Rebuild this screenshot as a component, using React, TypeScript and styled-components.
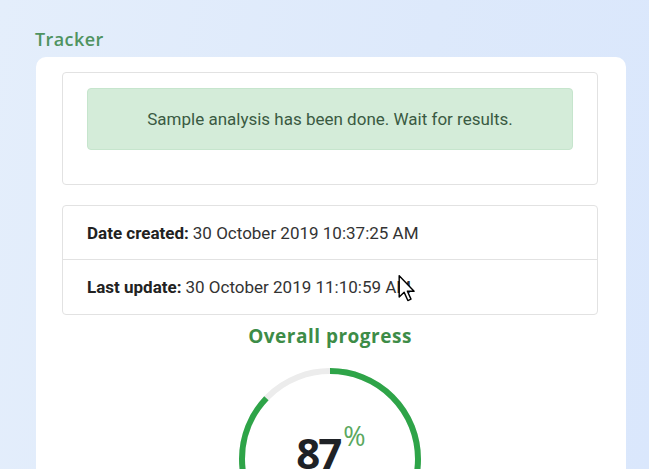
import React from "react";
import styled, { createGlobalStyle } from "styled-components";

const GlobalStyle = createGlobalStyle`
  html, body {
    margin: 0;
    padding: 0;
    height: 100%;
    overflow: hidden;
  }
  body {
    background: linear-gradient(100deg, #e4eefb 0%, #dde9fb 60%, #dae7fc 100%);
    font-family: Roboto, "Liberation Sans", Arial, sans-serif;
  }
`;

const Page = styled.div`
  padding: 28px 23px 0 36px;
`;

const Title = styled.h2`
  margin: 0 0 7px -1px;
  font-family: "Open Sans", "Noto Sans", sans-serif;
  font-size: 18px;
  font-weight: 600;
  line-height: 22px;
  letter-spacing: 0.4px;
  color: #4f9360;
`;

const Card = styled.div`
  position: relative;
  background: #ffffff;
  border-radius: 10px 10px 0 0;
  padding: 15px 28px 0 26px;
  height: 420px;
  display: flex;
  flex-direction: column;
`;

const Panel = styled.div`
  border: 1px solid #e2e2e2;
  border-radius: 4px;
  background: #fff;
`;

const AlertPanel = styled(Panel)`
  padding: 15px 24px 34px 24px;
  margin-bottom: 20px;
`;

const Alert = styled.div`
  height: 60px;
  display: flex;
  align-items: center;
  justify-content: center;
  background: #d4ecd9;
  border: 1px solid #c6e5cd;
  border-radius: 4px;
  color: #3a5a42;
  font-size: 17px;
`;

const InfoRow = styled.div<{ $last?: boolean }>`
  height: ${(p) => (p.$last ? 54 : 53)}px;
  display: flex;
  align-items: center;
  padding: 0 24px;
  font-size: 17px;
  color: #333;
  border-bottom: ${(p) => (p.$last ? "none" : "1px solid #e2e2e2")};
`;

const Label = styled.strong`
  font-weight: 700;
  color: #222;
  margin-right: 4px;
`;

const Progress = styled.div`
  display: flex;
  flex-direction: column;
  align-items: center;
  margin-top: 10px;
`;

const ProgressTitle = styled.h3`
  margin: 0 0 19px;
  font-family: "Open Sans", "Noto Sans", sans-serif;
  font-size: 19px;
  font-weight: 700;
  line-height: 22px;
  letter-spacing: 0.5px;
  color: #3d8c47;
`;

const Gauge = styled.div`
  position: relative;
  width: 186px;
  height: 186px;
`;

const GaugeLabel = styled.div`
  position: absolute;
  inset: 0;
  display: flex;
  justify-content: center;
  align-items: flex-start;
  padding-top: 59px;
  padding-left: 2px;
`;

const Value = styled.span`
  font-family: "Open Sans", "Noto Sans", sans-serif;
  font-size: 42px;
  font-weight: 700;
  line-height: 56px;
  color: #1f2226;
  letter-spacing: -2px;
`;

const Percent = styled.span`
  font-family: "Open Sans", "Noto Sans", sans-serif;
  font-size: 27px;
  font-weight: 400;
  line-height: 30px;
  color: #5aa85e;
  margin-left: 3px;
  margin-top: -4px;
`;

const Cursor = styled.svg`
  position: absolute;
  left: 362px;
  top: 218px;
  width: 18px;
  height: 27px;
  pointer-events: none;
`;

const ProgressRing = ({ value }: { value: number }) => {
  const r = 88;
  const c = 2 * Math.PI * r;
  return (
    <Gauge>
      <svg width="186" height="186" viewBox="0 0 186 186">
        <circle cx="93" cy="93" r={r} fill="none" stroke="#ececec" strokeWidth="6" />
        <circle
          cx="93"
          cy="93"
          r={r}
          fill="none"
          stroke="#2ea448"
          strokeWidth="6"
          strokeDasharray={`${(c * value) / 100} ${c}`}
          transform="rotate(-90 93 93)"
        />
      </svg>
      <GaugeLabel>
        <Value>{value}</Value>
        <Percent>%</Percent>
      </GaugeLabel>
    </Gauge>
  );
};

export default function App() {
  return (
    <>
      <GlobalStyle />
      <Page>
        <Title>Tracker</Title>
        <Card>
          <AlertPanel>
            <Alert>Sample analysis has been done. Wait for results.</Alert>
          </AlertPanel>
          <Panel>
            <InfoRow>
              <Label>Date created:</Label> 30 October 2019 10:37:25 AM
            </InfoRow>
            <InfoRow $last>
              <Label>Last update:</Label> 30 October 2019 11:10:59 AM
            </InfoRow>
          </Panel>
          <Progress>
            <ProgressTitle>Overall progress</ProgressTitle>
            <ProgressRing value={87} />
          </Progress>
          <Cursor viewBox="0 0 12 19">
            <path
              d="M0.5 0.5 L0.5 15.5 L4 12.2 L6.6 18 L8.8 17 L6.3 11.4 L11 11.4 Z"
              fill="#fff"
              stroke="#000"
              strokeWidth="1"
              strokeLinejoin="round"
            />
          </Cursor>
        </Card>
      </Page>
    </>
  );
}
